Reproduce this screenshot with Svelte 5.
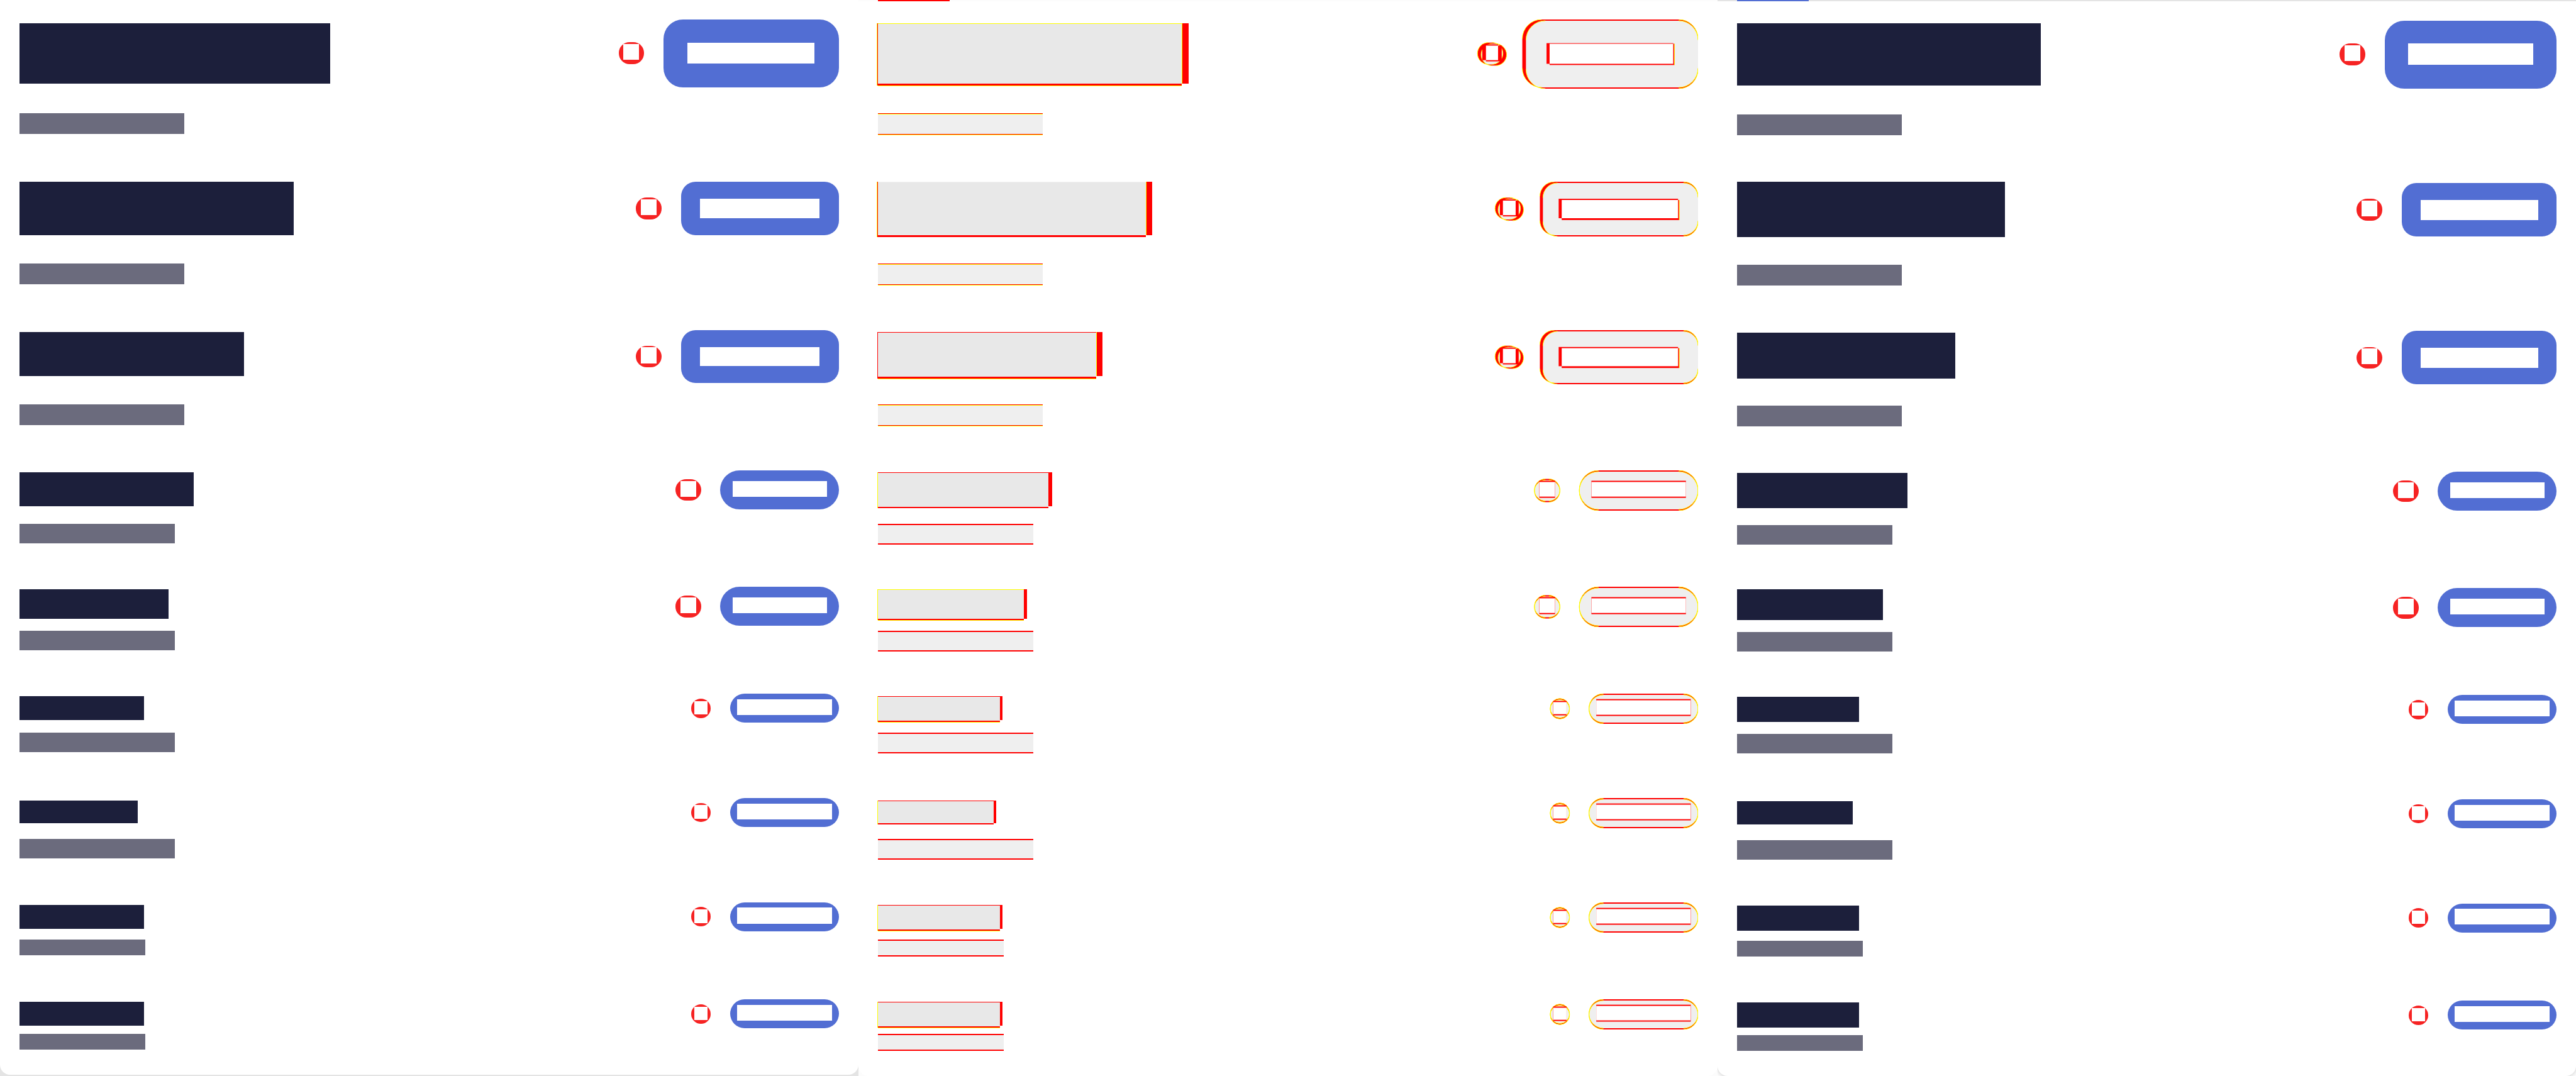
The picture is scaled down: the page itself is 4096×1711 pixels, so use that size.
<script>
  // Drawing units to CSS pixels.
  const SCALE = 4096 / 4248;
  const px = (v) => Math.round(v * SCALE);
  const span = (a, b) => `${px(b) - px(a)}px`;

  const EDGE = 32; // left inset of every panel
  const END = 1384; // right edge of the badges
  const MARKS = 1000; // left edge of the compared badges

  // Box edges are [left, top, right, bottom], measured from the panel's corner.
  const big = (top, x, ax, wx, r, y, wt, wb, at) => ({
    badge: [x, y, END, top],
    inner: [wx[0], wt, wx[1], wb],
    alert: [ax, at, ax + 42, at + 36],
    hole: [ax + 8, at + 3, ax + 34, at + 29],
    r
  });
  const large = {
    before: [
      big(144, 1094, 1020, [1134, 1343], 32, 32, 71, 105, 70),
      big(388, 1123, 1049, [1154, 1351], 24, 300, 328, 360, 326),
      big(632, 1123, 1049, [1154, 1351], 24, 544, 572, 604, 570)
    ],
    after: [
      big(146, 1100, 1026, [1139, 1345], 32, 34, 72, 107, 72),
      big(390, 1128, 1054, [1159, 1353], 24, 302, 330, 363, 328),
      big(634, 1128, 1054, [1159, 1353], 24, 546, 574, 607, 572)
    ]
  };
  const medium = (y) => ({
    badge: [1188, y, END, y + 64],
    inner: [1208, y + 17, 1364, y + 43],
    alert: [1114, y + 14, 1156, y + 50],
    hole: [1122, y + 17, 1148, y + 43],
    r: 32
  });
  const small = (y) => ({
    badge: [1204, y, END, y + 48],
    inner: [1216, y + 9, 1372, y + 35],
    alert: [1140, y + 8, 1172, y + 40],
    hole: [1145, y + 12, 1167, y + 34],
    r: 24
  });

  // top, before and after: title [top, right, bottom] and note [top, right, bottom]
  const source = [
    { top: 32, b: [38, 545, 138], a: [38, 533, 141], nb: [187, 304, 221], na: [189, 304, 223], rim: 'yellow', left: 'both', foot: true },
    { top: 300, b: [300, 484, 388], a: [300, 474, 391], nb: [435, 304, 469], na: [437, 304, 471], rim: 'pale', left: 'both', foot: false },
    { top: 544, b: [548, 402, 620], a: [549, 392, 624], nb: [667, 304, 701], na: [669, 304, 703], rim: 'red', left: 'red', foot: true },
    { top: 776, b: [779, 319, 835], a: [780, 313, 838], nb: [864, 288, 896], na: [866, 288, 898], rim: 'red', left: 'yellow', foot: false },
    { top: 968, b: [972, 278, 1020], a: [972, 273, 1023], nb: [1040, 288, 1072], na: [1042, 288, 1074], rim: 'yellow', left: 'yellow', foot: true },
    { top: 1144, b: [1148, 237, 1188], a: [1149, 233, 1191], nb: [1208, 288, 1240], na: [1210, 288, 1242], rim: 'red', left: 'yellow', foot: true },
    { top: 1316, b: [1320, 227, 1358], a: [1321, 223, 1360], nb: [1384, 288, 1416], na: [1386, 288, 1418], rim: 'red', left: 'yellow', foot: false },
    { top: 1488, b: [1492, 237, 1532], a: [1493, 233, 1535], nb: [1549, 240, 1575], na: [1551, 240, 1577], rim: 'red', left: 'yellow', foot: true },
    { top: 1648, b: [1652, 237, 1692], a: [1653, 233, 1695], nb: [1705, 240, 1731], na: [1707, 240, 1733], rim: 'red', left: 'yellow', foot: true }
  ];

  const rows = source.map((row, i) => {
    const make = i < 5 ? medium : small;
    return {
      ...row,
      height: source[i + 1] ? span(row.top, source[i + 1].top) : 'auto',
      before: large.before[i] ?? make(row.top),
      after: large.after[i] ?? make(row.top + 2)
    };
  });

  const snapshots = {
    before: rows.map((r) => ({ top: r.top, height: r.height, title: r.b, note: r.nb, tag: r.before })),
    after: rows.map((r) => ({ top: r.top, height: r.height, title: r.a, note: r.na, tag: r.after }))
  };

  const frame = (box, top) =>
    `width:${span(box[0], box[2])};height:${span(box[1], box[3])};margin-top:${span(top, box[1])}`;
  const inset = (outer, hole) =>
    `width:${span(hole[0], hole[2])};height:${span(hole[1], hole[3])};` +
    `margin-left:${span(outer[0], hole[0])};margin-top:${span(outer[1], hole[1])}`;

  const overlap = (p, q) => [
    Math.max(p[0], q[0]),
    Math.max(p[1], q[1]),
    Math.min(p[2], q[2]),
    Math.min(p[3], q[3])
  ];
  const arcs = ([l, t, r, b], c) =>
    `M${l} ${t + c}A${c} ${c} 0 0 1 ${l + c} ${t}M${r - c} ${t}A${c} ${c} 0 0 1 ${r} ${t + c}` +
    `M${r} ${b - c}A${c} ${c} 0 0 1 ${r - c} ${b}M${l + c} ${b}A${c} ${c} 0 0 1 ${l} ${b - c}`;
</script>

{#snippet box(b, cls, r)}
  <rect class={cls} x={b[0]} y={b[1]} width={b[2] - b[0]} height={b[3] - b[1]} rx={r} />
{/snippet}

{#snippet compared(p, q, r, hp, hq, id)}
  <clipPath {id}>{@render box(p, '', r)}</clipPath>
  {@render box(p, 'changed', r)}
  {@render box(q, 'changed', r)}
  <g clip-path={`url(#${id})`}>{@render box(q, 'same', r)}</g>
  <path class="fringe" d={arcs(p, r)} />
  <path class="fringe" d={arcs(q, r)} />
  {@render box(hp, 'changed', 0)}
  {@render box(hq, 'changed', 0)}
  {@render box(overlap(hp, hq), 'blank', 0)}
{/snippet}

{#snippet snapshot(list)}
  {#each list as row}
    <article class="row" style:height={row.height}>
      <div class="text">
        <div class="title" style={frame([EDGE, row.title[0], row.title[1], row.title[2]], row.top)}></div>
        <div class="note" style={frame([EDGE, row.note[0], row.note[1], row.note[2]], row.title[2])}></div>
      </div>
      <div class="tags" style:column-gap={span(row.tag.alert[2], row.tag.badge[0])}>
        <div class="alert" style={frame(row.tag.alert, row.top)}>
          <div class="hole" style={inset(row.tag.alert, row.tag.hole)}></div>
        </div>
        <div class="badge" class:soft={row.tag.r === 24} style={frame(row.tag.badge, row.top)}>
          <div class="hole" style={inset(row.tag.badge, row.tag.inner)}></div>
        </div>
      </div>
    </article>
  {/each}
{/snippet}

<main class="compare">
  <section class="panel before">
    <div class="sheet">
      <div class="strip"></div>
      {@render snapshot(snapshots.before)}
    </div>
  </section>

  <section class="panel delta">
    <div class="sheet">
      <div class="strip"><div class="tab"></div></div>
      {#each rows as row, i}
        <article class="row" style:height={row.height}>
          <div class="text">
            <div class="pair" style:margin-top={span(row.top, row.b[0])}>
              <div
                class="block rim-{row.rim} left-{row.left}"
                class:foot={row.foot}
                style:width={span(EDGE, row.a[1])}
                style:height={span(row.b[0], row.a[2])}
              ></div>
              <div class="excess" style:width={span(row.a[1], row.b[1])} style:height={span(row.b[0], row.b[2])}></div>
            </div>
            <div
              class="line"
              class:mixed={i < 3}
              style={frame([EDGE, row.nb[0], row.nb[1], row.na[2]], row.a[2])}
            ></div>
          </div>
          <svg
            class="marks"
            viewBox={`${MARKS} ${row.top} ${END - MARKS} ${row.after.badge[3] - row.top}`}
            style:width={span(MARKS, END)}
            style:height={span(row.top, row.after.badge[3])}
            preserveAspectRatio="none"
            aria-hidden="true"
          >
            {@render compared(row.before.badge, row.after.badge, row.before.r, row.before.inner, row.after.inner, `badge-${i}`)}
            {@render compared(
              row.before.alert,
              row.after.alert,
              (row.before.alert[3] - row.before.alert[1]) / 2,
              row.before.hole,
              row.after.hole,
              `alert-${i}`
            )}
            {#if i < 3}
              <path class="fringe" d={`M${row.after.inner[2]} ${row.after.inner[1]}V${row.after.inner[3]}`} />
            {/if}
          </svg>
        </article>
      {/each}
    </div>
  </section>

  <section class="panel after">
    <div class="sheet">
      <div class="strip"><div class="tab"></div></div>
      {@render snapshot(snapshots.after)}
    </div>
  </section>
</main>

<style>
  :global(body) {
    margin: 0;
    background: #fff;
  }

  .compare {
    display: grid;
    grid-template-columns: repeat(3, minmax(0, 1fr));
    min-height: 100vh;
  }

  .panel {
    display: flex;
    overflow: hidden;
  }

  .sheet {
    flex: 1;
    box-sizing: border-box;
    background: #fff;
    border-radius: 0 0 16px 16px;
  }

  .before {
    background: #e4e4e4;
  }

  .before .sheet {
    margin-bottom: 2px;
  }

  .delta {
    background: #fcfcfc;
  }

  .after .sheet {
    box-shadow: 0 0 8px rgba(0, 0, 0, 0.25);
  }

  .strip {
    height: 2px;
    padding: 0 31px;
    margin-bottom: 29px;
  }

  .delta .strip {
    background: #fcfcfc;
  }

  .after .strip {
    background: #e4e4e4;
  }

  .tab {
    width: 114px;
    height: 2px;
    background: #526ed3;
  }

  .delta .tab {
    background: #f00;
  }

  .row {
    display: flex;
    justify-content: space-between;
    align-items: flex-start;
    padding: 0 31px;
  }

  .text {
    display: flex;
    flex-direction: column;
  }

  .title {
    background: #1c1f3b;
  }

  .note {
    background: #6b6b7d;
  }

  .tags {
    display: flex;
    align-items: flex-start;
  }

  .alert,
  .badge {
    display: flex;
    align-items: flex-start;
    border-radius: 31px;
    background: #526ed3;
  }

  .badge.soft {
    border-radius: 23px;
  }

  .alert {
    border-radius: 17px;
    background: #f62323;
  }

  .hole {
    background: #fff;
  }

  .pair {
    display: flex;
    align-items: flex-start;
  }

  .block {
    box-sizing: border-box;
    background: #e8e8e8;
    border-top: 1px solid #f00;
    border-bottom: 2px solid #f00;
  }

  .rim-yellow {
    border-top-color: #ff0;
  }

  .rim-pale {
    border-top-color: #efefef;
  }

  .rim-yellow.left-both,
  .rim-pale,
  .left-red {
    border-bottom-width: 3px;
  }

  .left-both {
    box-shadow: -1px 0 #f00, -2px 0 #ff0;
  }

  .left-red {
    box-shadow: -1px 0 #f00;
  }

  .left-yellow {
    box-shadow: -1px 0 #ff0;
  }

  .left-both.foot {
    box-shadow: 0 1px #ff0, -1px 0 #f00, -2px 0 #ff0;
  }

  .left-red.foot {
    box-shadow: 0 1px #ff0, -1px 0 #f00;
  }

  .left-yellow.foot {
    box-shadow: 0 1px #ff0, -1px 0 #ff0;
  }

  .excess {
    background: #f00;
    box-shadow: inset 1px 0 #ff0;
  }

  .left-yellow + .excess {
    box-shadow: none;
  }

  .line {
    box-sizing: border-box;
    background: #efefef;
    border: solid #f00;
    border-width: 2px 0;
  }

  .line.mixed {
    border-width: 1px 0;
    border-bottom-color: #ff0;
    box-shadow: inset 0 1px #ff0, inset 0 -1px #f00;
  }

  .marks {
    display: block;
  }

  .changed {
    fill: #f00;
  }

  .same {
    fill: #efefef;
  }

  .blank {
    fill: #fff;
  }

  .fringe {
    fill: none;
    stroke: #ff0;
    stroke-width: 1;
  }
</style>
